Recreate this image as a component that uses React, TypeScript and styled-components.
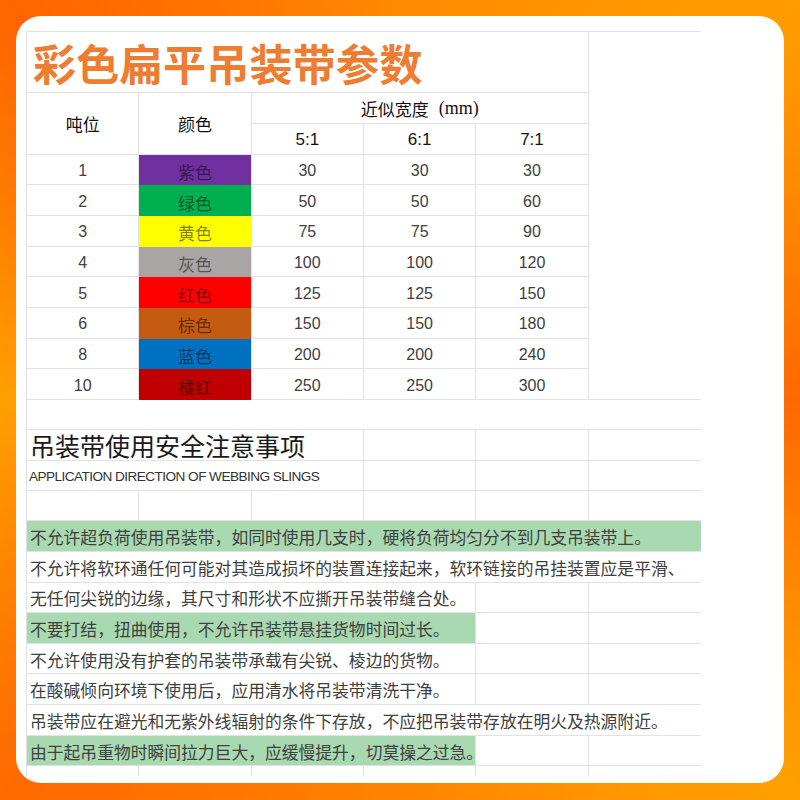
import { Fragment } from "react";
import styled, { createGlobalStyle } from "styled-components";

const GlobalStyle = createGlobalStyle`
  html, body {
    margin: 0;
    padding: 0;
  }
  body {
    width: 800px;
    height: 800px;
    background: conic-gradient(
      from 0deg at 50% 50%,
      #ff8a00 0deg,
      #ff9c00 45deg,
      #ff6800 90deg,
      #ffa000 135deg,
      #ff8400 180deg,
      #ff6a00 225deg,
      #ffa000 270deg,
      #ff6400 315deg,
      #ff8a00 360deg
    );
    font-family: "Liberation Sans", "Noto Sans CJK SC", sans-serif;
  }
`;

const LINE = "#e2e2e2";
const GREEN = "#a9d9b0";

const Page = styled.div`
  box-sizing: border-box;
  width: 800px;
  height: 800px;
  padding: 16px;
`;

const Card = styled.div`
  box-sizing: border-box;
  height: 767px;
  background: #fff;
  border-radius: 25px;
  padding: 15px 0 0 10px;
  overflow: hidden;
`;

const Sheet = styled.div`
  display: grid;
  width: 674px;
  grid-template-columns: repeat(6, 112.33px);
  grid-template-rows:
    61.33px repeat(10, 30.67px) repeat(4, 30.33px) repeat(8, 30.67px)
    10px;
  border-top: 1px solid ${LINE};
  border-left: 1px solid ${LINE};
`;

interface CellProps {
  $col: string;
  $row: string;
  $right?: boolean;
  $bottom?: boolean;
  $bg?: string;
}

const Cell = styled.div<CellProps>`
  box-sizing: border-box;
  grid-column: ${(p) => p.$col};
  grid-row: ${(p) => p.$row};
  display: flex;
  align-items: center;
  justify-content: center;
  padding-top: 3px;
  white-space: nowrap;
  background: ${(p) => p.$bg || "transparent"};
  border-right: ${(p) => (p.$right === false ? "none" : `1px solid ${LINE}`)};
  border-bottom: ${(p) => (p.$bottom === false ? "none" : `1px solid ${LINE}`)};
  font-size: 16px;
  color: #404040;
`;

const Title = styled(Cell)`
  justify-content: flex-start;
  padding: 0 0 0 6px;
  font-family: "Noto Sans CJK SC", sans-serif;
  font-weight: 700;
  font-size: 43px;
  letter-spacing: 0.3px;
  color: #ed7d31;
`;

const Head = styled(Cell)`
  padding-top: 1px;
  font-size: 17px;
  color: #111;
`;

const Unit = styled.span`
  font-family: "Liberation Serif", serif;
  font-size: 18px;
  margin-left: 10px;
`;

const Ratio = styled(Cell)`
  font-size: 17px;
  color: #111;
`;

const Swatch = styled(Cell)`
  font-size: 17px;
  color: rgba(0, 0, 0, 0.5);
  border-bottom: none;
`;

const SubTitle = styled(Cell)`
  justify-content: flex-start;
  padding: 0 0 0 3px;
  font-size: 25px;
  color: #1a1a1a;
`;

const English = styled(Cell)`
  justify-content: flex-start;
  padding-left: 2px;
  font-size: 13.6px;
  letter-spacing: -0.55px;
  color: #333;
`;

const Note = styled(Cell)`
  justify-content: flex-start;
  padding-left: 3px;
  padding-top: 2px;
  font-size: 16.8px;
  color: #404040;
  overflow: visible;
`;

const rows = [
  { t: "1", name: "紫色", bg: "#7030a0", w: ["30", "30", "30"] },
  { t: "2", name: "绿色", bg: "#00b050", w: ["50", "50", "60"] },
  { t: "3", name: "黄色", bg: "#ffff00", w: ["75", "75", "90"] },
  { t: "4", name: "灰色", bg: "#a9a5a4", w: ["100", "100", "120"] },
  { t: "5", name: "红色", bg: "#ff0000", w: ["125", "125", "150"] },
  { t: "6", name: "棕色", bg: "#c55a11", w: ["150", "150", "180"] },
  { t: "8", name: "蓝色", bg: "#0070c0", w: ["200", "200", "240"] },
  { t: "10", name: "橘红", bg: "#c00000", w: ["250", "250", "300"] },
];

// cols: how far the note reaches (4 = A-D, 6 = A-F)
const notes = [
  { text: "不允许超负荷使用吊装带，如同时使用几支时，硬将负荷均匀分不到几支吊装带上。", cols: 6, green: true },
  { text: "不允许将软环通任何可能对其造成损坏的装置连接起来，软环链接的吊挂装置应是平滑、", cols: 6 },
  { text: "无任何尖锐的边缘，其尺寸和形状不应撕开吊装带缝合处。", cols: 4 },
  { text: "不要打结，扭曲使用，不允许吊装带悬挂货物时间过长。", cols: 4, green: true },
  { text: "不允许使用没有护套的吊装带承载有尖锐、棱边的货物。", cols: 4 },
  { text: "在酸碱倾向环境下使用后，应用清水将吊装带清洗干净。", cols: 4 },
  { text: "吊装带应在避光和无紫外线辐射的条件下存放，不应把吊装带存放在明火及热源附近。", cols: 6 },
  { text: "由于起吊重物时瞬间拉力巨大，应缓慢提升，切莫操之过急。", cols: 4, green: true },
];

const noteStart = 16;

export default function App() {
  return (
    <>
      <GlobalStyle />
      <Page>
        <Card>
          <Sheet>
            <Title $col="1 / 6" $row="1">彩色扁平吊装带参数</Title>
            <Cell $col="6" $row="1 / 12" $right={false} />

            <Head $col="1" $row="2 / 4">吨位</Head>
            <Head $col="2" $row="2 / 4">颜色</Head>
            <Head $col="3 / 6" $row="2">
              近似宽度<Unit>(mm)</Unit>
            </Head>
            <Ratio $col="3" $row="3">5:1</Ratio>
            <Ratio $col="4" $row="3">6:1</Ratio>
            <Ratio $col="5" $row="3">7:1</Ratio>

            {rows.map((r, i) => (
              <Fragment key={r.t}>
                <Cell $col="1" $row={`${4 + i}`}>{r.t}</Cell>
                <Swatch $col="2" $row={`${4 + i}`} $bg={r.bg}>{r.name}</Swatch>
                {r.w.map((v, j) => (
                  <Cell key={j} $col={`${3 + j}`} $row={`${4 + i}`}>{v}</Cell>
                ))}
              </Fragment>
            ))}

            <Cell $col="1 / 7" $row="12" $right={false} />

            <SubTitle $col="1 / 4" $row="13">吊装带使用安全注意事项</SubTitle>
            <Cell $col="4" $row="13" />
            <Cell $col="5" $row="13" />
            <Cell $col="6" $row="13" $right={false} />

            <English $col="1 / 4" $row="14">APPLICATION DIRECTION OF WEBBING SLINGS</English>
            <Cell $col="4" $row="14" />
            <Cell $col="5" $row="14" />
            <Cell $col="6" $row="14" $right={false} />

            {[1, 2, 3, 4, 5].map((c) => (
              <Cell key={c} $col={`${c}`} $row="15" />
            ))}
            <Cell $col="6" $row="15" $right={false} />

            {notes.map((n, i) => (
              <Fragment key={i}>
                <Note
                  $col={`1 / ${n.cols + 1}`}
                  $row={`${noteStart + i}`}
                  $bg={n.green ? GREEN : undefined}
                  $right={n.cols === 4}
                >
                  {n.text}
                </Note>
                {n.cols === 4 && (
                  <>
                    <Cell $col="5" $row={`${noteStart + i}`} />
                    <Cell $col="6" $row={`${noteStart + i}`} $right={false} />
                  </>
                )}
              </Fragment>
            ))}

            {[1, 2, 3, 4, 5].map((c) => (
              <Cell key={c} $col={`${c}`} $row="24" $bottom={false} />
            ))}
          </Sheet>
        </Card>
      </Page>
    </>
  );
}
